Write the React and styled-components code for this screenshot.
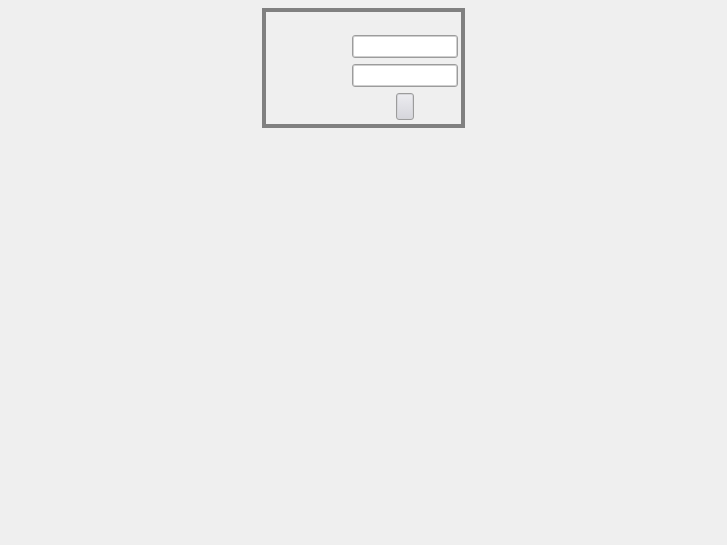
import React from "react";
import styled, { createGlobalStyle } from "styled-components";

const Global = createGlobalStyle`
  html, body { background: #efefef; }
  body { margin: 8px; font-family: "Liberation Sans", Arial, sans-serif; }
`;

const Panel = styled.form`
  box-sizing: border-box;
  width: 203px;
  height: 120px;
  margin: 0 auto;
  border: 4px solid #808080;
  background: #efefef;
  display: grid;
  grid-template-columns: 86px 106px;
  grid-template-rows: 17px 23px 23px 27px;
  row-gap: 6px;
  padding: 0 3px 4px 0;
`;

const Label = styled.label`
  grid-column: 1;
  font-size: 13px;
  color: #333;
`;

const Field = styled.input`
  grid-column: 2;
  box-sizing: border-box;
  width: 106px;
  height: 23px;
  margin: 0;
  border: 1px solid #9c9c9c;
  box-shadow: inset 0 0 0 1px #cfcfcf;
  border-radius: 3px;
  background: #fff;
  outline: none;
  padding: 0 4px;
`;

const Spacer = styled.div`
  grid-column: 1 / span 2;
`;

const Submit = styled.button`
  grid-column: 2;
  justify-self: center;
  box-sizing: border-box;
  width: 18px;
  height: 27px;
  margin: 0;
  padding: 0;
  border: 1px solid #9c9c9c;
  box-shadow: inset 0 0 0 1px #d6d6da;
  border-radius: 3px;
  background: linear-gradient(#ececf0, #d6d6dc);
`;

export default function App() {
  return (
    <>
      <Global />
      <Panel onSubmit={(e) => e.preventDefault()}>
        <Spacer />
        <Label />
        <Field type="text" />
        <Label />
        <Field type="password" />
        <Submit type="submit" />
      </Panel>
    </>
  );
}
